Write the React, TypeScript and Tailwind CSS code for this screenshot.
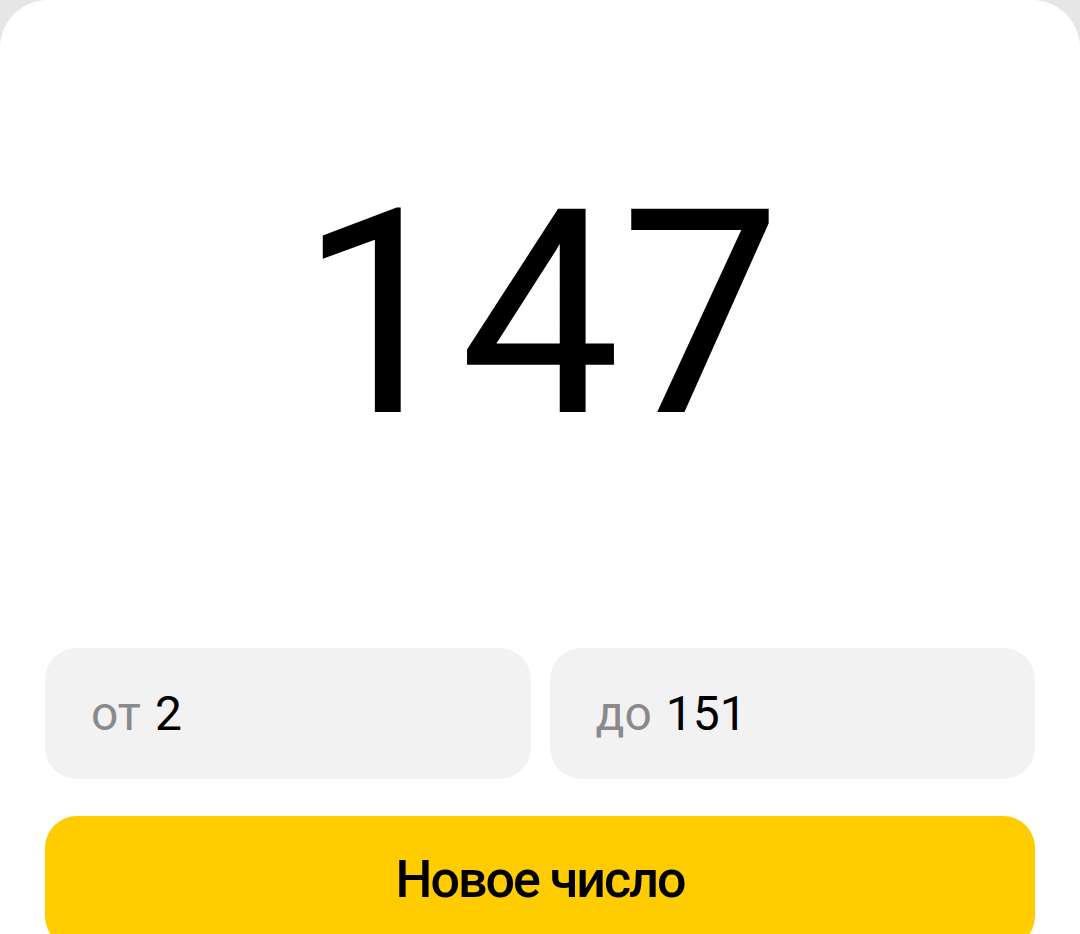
import React from 'react';

function RangeField({ label, value }: { label: string; value: number }) {
  return (
    <div className="flex h-[131px] flex-1 items-center rounded-[32px] bg-[#f2f2f2] pl-[46px]">
      <span className="text-[48px] leading-none text-[#8a8a8a]">{label}</span>
      <span className="ml-[14px] text-[48px] leading-none text-black">{value}</span>
    </div>
  );
}

export default function App() {
  return (
    <div
      className="h-[934px] w-[1080px] overflow-hidden bg-[#e6e6e6]"
      style={{ fontFamily: 'Roboto, "Noto Sans", sans-serif' }}
    >
      <div className="flex h-full flex-col rounded-t-[48px] bg-white">
        {/* big random number */}
        <div className="flex h-[648px] shrink-0 items-center justify-center pb-[18px]">
          <span className="text-[286px] leading-none text-black">147</span>
        </div>

        {/* range inputs */}
        <div className="flex shrink-0 gap-[19px] px-[45px]">
          <RangeField label="от" value={2} />
          <RangeField label="до" value={151} />
        </div>

        {/* action button */}
        <div className="shrink-0 px-[45px] pt-[37px]">
          <button className="flex h-[132px] w-full items-start justify-center rounded-[32px] bg-[#ffcc00] pt-[38px]">
            <span className="text-[52px] font-medium leading-none tracking-[-2px] text-black">
              Новое число
            </span>
          </button>
        </div>
      </div>
    </div>
  );
}
